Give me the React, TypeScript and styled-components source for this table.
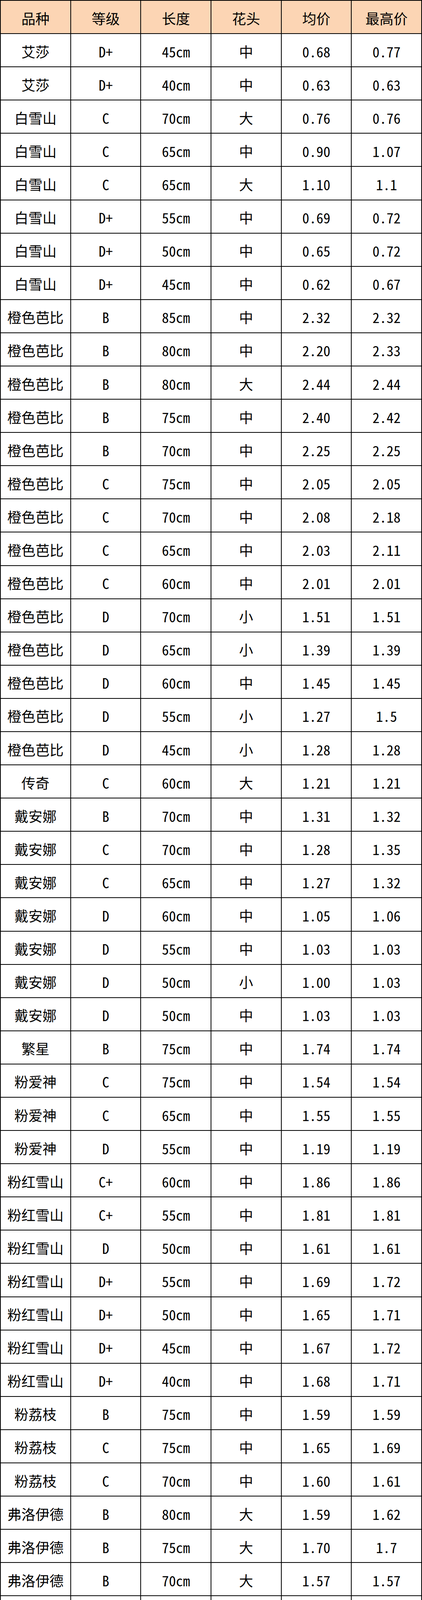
import styled, { createGlobalStyle } from 'styled-components';

const GlobalStyle = createGlobalStyle`
  html, body {
    margin: 0;
    padding: 0;
    background: #ffffff;
  }
`;

const Sheet = styled.div`
  width: 1080px;
  height: 5618px;
  box-sizing: border-box;
  padding: 2px;
  display: grid;
  grid-template-columns: repeat(6, 1fr);
  grid-template-rows: repeat(66, 1fr);
  gap: 2px;
  background: #000000;
`;

const Cell = styled.div<{ $head?: boolean }>`
  display: flex;
  align-items: center;
  justify-content: center;
  padding-top: 4px;
  box-sizing: border-box;
  overflow: hidden;
  background: ${(p) => (p.$head ? '#fcd5b4' : '#ffffff')};
  color: #000000;
  font-family: 'Noto Sans CJK SC', 'Noto Sans', sans-serif;
  font-feature-settings: 'hwid';
  font-size: 36px;
  line-height: 1;
  white-space: nowrap;
`;

const headers = ['品种', '等级', '长度', '花头', '均价', '最高价'];

const raw = `艾莎 D+ 45 中 0.68 0.77
艾莎 D+ 40 中 0.63 0.63
白雪山 C 70 大 0.76 0.76
白雪山 C 65 中 0.90 1.07
白雪山 C 65 大 1.10 1.1
白雪山 D+ 55 中 0.69 0.72
白雪山 D+ 50 中 0.65 0.72
白雪山 D+ 45 中 0.62 0.67
橙色芭比 B 85 中 2.32 2.32
橙色芭比 B 80 中 2.20 2.33
橙色芭比 B 80 大 2.44 2.44
橙色芭比 B 75 中 2.40 2.42
橙色芭比 B 70 中 2.25 2.25
橙色芭比 C 75 中 2.05 2.05
橙色芭比 C 70 中 2.08 2.18
橙色芭比 C 65 中 2.03 2.11
橙色芭比 C 60 中 2.01 2.01
橙色芭比 D 70 小 1.51 1.51
橙色芭比 D 65 小 1.39 1.39
橙色芭比 D 60 中 1.45 1.45
橙色芭比 D 55 小 1.27 1.5
橙色芭比 D 45 小 1.28 1.28
传奇 C 60 大 1.21 1.21
戴安娜 B 70 中 1.31 1.32
戴安娜 C 70 中 1.28 1.35
戴安娜 C 65 中 1.27 1.32
戴安娜 D 60 中 1.05 1.06
戴安娜 D 55 中 1.03 1.03
戴安娜 D 50 小 1.00 1.03
戴安娜 D 50 中 1.03 1.03
繁星 B 75 中 1.74 1.74
粉爱神 C 75 中 1.54 1.54
粉爱神 C 65 中 1.55 1.55
粉爱神 D 55 中 1.19 1.19
粉红雪山 C+ 60 中 1.86 1.86
粉红雪山 C+ 55 中 1.81 1.81
粉红雪山 D 50 中 1.61 1.61
粉红雪山 D+ 55 中 1.69 1.72
粉红雪山 D+ 50 中 1.65 1.71
粉红雪山 D+ 45 中 1.67 1.72
粉红雪山 D+ 40 中 1.68 1.71
粉荔枝 B 75 中 1.59 1.59
粉荔枝 C 75 中 1.65 1.69
粉荔枝 C 70 中 1.60 1.61
弗洛伊德 B 80 大 1.59 1.62
弗洛伊德 B 75 大 1.70 1.7
弗洛伊德 B 70 大 1.57 1.57
弗洛伊德 C 65 中 1.25 1.34
弗洛伊德 C 60 中 1.33 1.34
弗洛伊德 D 70 中 1.04 1.12
弗洛伊德 D 55 中 1.10 1.12
弗洛伊德 D 50 中 1.13 1.16
弗洛伊德 D+ 60 中 0.90 1.04
弗洛伊德 D+ 55 中 0.83 0.83
弗洛伊德 D+ 45 中 0.64 0.64
高胜 B 75 中 1.43 1.43
高胜 C 70 中 1.23 1.23
高胜 C 70 大 1.27 1.27
高胜 C 60 中 1.25 1.25
高胜 D 75 中 1.15 1.15
高胜 D 70 中 0.86 0.86
高原红 A 80 大 2.34 2.34
高原红 A 75 大 2.21 2.21
高原红 B 90 中 1.90 1.93
高原红 B 85 中 1.73 1.73`;

const rows = raw.split('\n').map((line) => {
  const [name, grade, len, head, avg, max] = line.trim().split(' ');
  return [name, grade, `${len}cm`, head, avg, max];
});

export default function App() {
  return (
    <>
      <GlobalStyle />
      <Sheet>
        {headers.map((h) => (
          <Cell key={h} $head>
            {h}
          </Cell>
        ))}
        {rows.map((r, i) =>
          r.map((v, j) => <Cell key={`${i}-${j}`}>{v}</Cell>)
        )}
      </Sheet>
    </>
  );
}
